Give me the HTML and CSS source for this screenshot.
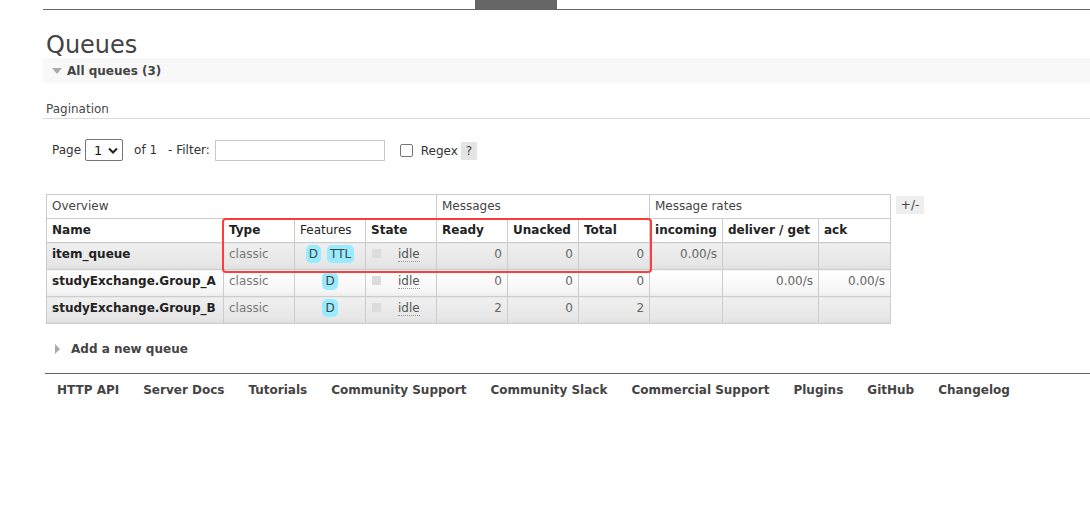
FILE: index.html
```html
<!DOCTYPE html>
<html>
<head>
<meta charset="utf-8">
<link rel="stylesheet" href="styles.css">
</head>
<body>
<div class="topbar">
  <div class="toptab"></div>
</div>
<div class="main">
  <h1 class="title">Queues</h1>
  <div class="section-bar"><span class="tri-down"></span><span class="section-title">All queues (3)</span></div>
  <h3 class="pag-head">Pagination</h3>
  <div class="pag-row">
    <span class="lbl">Page</span>
    <span class="select"><span class="sel-val">1</span><svg class="chev" width="10" height="7" viewBox="0 0 10 7"><path d="M1 1.5 L5 5.5 L9 1.5" fill="none" stroke="#222" stroke-width="2"/></svg></span>
    <span class="lbl of">of 1</span>
    <span class="lbl filt">- Filter:</span>
    <span class="input"></span>
    <span class="check"></span>
    <span class="lbl regex">Regex</span>
    <span class="help">?</span>
  </div>

  <div class="table-wrap">
    <table class="list">
      <colgroup>
        <col class="c-name"><col class="c71"><col class="c71"><col class="c71"><col class="c71"><col class="c71"><col class="c71"><col class="c-inc"><col class="c-del"><col class="c-ack">
      </colgroup>
      <thead>
        <tr class="grp">
          <th colspan="4">Overview</th>
          <th colspan="3">Messages</th>
          <th colspan="3">Message rates</th>
        </tr>
        <tr class="cols">
          <th>Name</th><th>Type</th><th class="normal">Features</th><th>State</th><th>Ready</th><th>Unacked</th><th>Total</th><th>incoming</th><th>deliver / get</th><th>ack</th>
        </tr>
      </thead>
      <tbody>
        <tr class="alt1">
          <td class="name">item_queue</td>
          <td class="type">classic</td>
          <td class="feat"><span class="badge">D</span><span class="badge">TTL</span></td>
          <td class="state"><span class="sq"></span><span class="idle">idle</span></td>
          <td class="num">0</td><td class="num">0</td><td class="num">0</td>
          <td class="num">0.00/s</td><td></td><td></td>
        </tr>
        <tr class="alt2">
          <td class="name">studyExchange.Group_A</td>
          <td class="type">classic</td>
          <td class="feat"><span class="badge">D</span></td>
          <td class="state"><span class="sq"></span><span class="idle">idle</span></td>
          <td class="num">0</td><td class="num">0</td><td class="num">0</td>
          <td></td><td class="num">0.00/s</td><td class="num">0.00/s</td>
        </tr>
        <tr class="alt1">
          <td class="name">studyExchange.Group_B</td>
          <td class="type">classic</td>
          <td class="feat"><span class="badge">D</span></td>
          <td class="state"><span class="sq"></span><span class="idle">idle</span></td>
          <td class="num">2</td><td class="num">0</td><td class="num">2</td>
          <td></td><td></td><td></td>
        </tr>
      </tbody>
    </table>
    <span class="plusminus">+/-</span>
    <div class="highlight"></div>
  </div>

  <div class="add-bar"><span class="tri-right"></span><span class="section-title">Add a new queue</span></div>

  <div class="footer">
    <a>HTTP API</a><a>Server Docs</a><a>Tutorials</a><a>Community Support</a><a>Community Slack</a><a>Commercial Support</a><a>Plugins</a><a>GitHub</a><a>Changelog</a>
  </div>
</div>
</body>
</html>
```
FILE: styles.css
```css
html, body {
  margin: 0;
  padding: 0;
  background: #fff;
}
body {
  font-family: "DejaVu Sans", Verdana, sans-serif;
  font-size: 12px;
  color: #484848;
  width: 1090px;
  overflow: hidden;
}
.topbar {
  margin-left: 43px;
  height: 9px;
  border-bottom: 1px solid #666;
  position: relative;
}
.toptab {
  position: absolute;
  left: 432px;
  top: 0;
  width: 82px;
  height: 9px;
  background: #666;
}
.main {
  padding-left: 43px;
}
.title {
  margin: 0;
  padding: 21px 0 0 3px;
  height: 27px;
  font-size: 24px;
  line-height: 28px;
  font-weight: normal;
  color: #444;
}
.section-bar {
  height: 25px;
  background: #f8f8f8;
  display: flex;
  align-items: center;
}
.tri-down {
  width: 0;
  height: 0;
  border-left: 5px solid transparent;
  border-right: 5px solid transparent;
  border-top: 6px solid #aaa;
  margin-left: 9px;
  margin-right: 5px;
}
.section-title {
  font-weight: bold;
  font-size: 12px;
  color: #444;
}
.pag-head {
  margin: 0;
  margin-top: 19px;
  padding: 0 0 1px 3px;
  font-weight: normal;
  font-size: 12px;
  line-height: 15px;
  color: #484848;
  border-bottom: 1px solid #ddd;
}
.pag-row {
  display: flex;
  align-items: center;
  margin-top: 20px;
  padding-left: 9px;
  height: 22px;
}
.lbl {
  color: #333;
}
.select {
  margin-left: 4px;
  width: 38px;
  height: 22px;
  box-sizing: border-box;
  border: 1px solid #767676;
  border-radius: 2px;
  display: flex;
  align-items: center;
  justify-content: space-between;
  padding: 0 4px 0 8px;
  color: #111;
  font-size: 13px;
}
.of { margin-left: 11px; }
.filt { margin-left: 11px; }
.input {
  margin-left: 5px;
  width: 170px;
  height: 21px;
  box-sizing: border-box;
  border: 1px solid #c8c8c8;
  background: #fff;
}
.check {
  margin-left: 15px;
  width: 13px;
  height: 13px;
  box-sizing: border-box;
  border: 1px solid #767676;
  border-radius: 2px;
}
.regex {
  margin-left: 8px;
  position: relative;
  top: 1px;
}
.help {
  margin-left: 3px;
  width: 16px;
  height: 18px;
  background: #e4e4e4;
  color: #444;
  display: flex;
  align-items: center;
  justify-content: center;
  position: relative;
  top: 1px;
}
.table-wrap {
  margin-top: 33px;
  margin-left: 3px;
  position: relative;
  display: flex;
  align-items: flex-start;
}
table.list {
  border-collapse: collapse;
  table-layout: fixed;
  width: 844px;
}
col.c-name { width: 177px; }
col.c71 { width: 71px; }
col.c-inc { width: 73px; }
col.c-del { width: 96px; }
col.c-ack { width: 72px; }
table.list th, table.list td {
  border: 1px solid #ccc;
  padding: 0 5px;
  text-align: left;
  vertical-align: top;
  white-space: nowrap;
  overflow: hidden;
}
table.list th {
  height: 23px;
  line-height: 23px;
  color: #222;
}
table.list tr.grp th {
  font-weight: normal;
  color: #444;
  background: #fff;
}
table.list tr.cols th {
  font-weight: bold;
  background: #fff;
}
table.list tr.cols th.normal {
  font-weight: normal;
}
table.list td {
  height: 27px;
  box-sizing: border-box;
  padding-top: 3px;
  line-height: 16px;
}
tr.alt1 td {
  background: linear-gradient(#f0f0f0, #e6e6e6 80%, #dedede);
}
tr.alt2 td {
  background: linear-gradient(#ffffff, #f6f6f6 80%, #ececec);
}
table.list td.name {
  font-weight: bold;
  color: #222;
}
table.list td.type {
  color: #777;
}
table.list td.num {
  text-align: right;
  color: #666;
}
table.list td.feat {
  text-align: center;
  padding-top: 2px;
}
.badge {
  display: inline-block;
  background: #99ebff;
  color: #444;
  border-radius: 5px;
  padding: 1px 3px;
  line-height: 16px;
  margin: 0 3px;
}
table.list td.state {
  padding-top: 3px;
}
.sq {
  display: inline-block;
  width: 9px;
  height: 9px;
  background: #dcdcdc;
  vertical-align: top;
  margin-top: 3px;
  margin-left: 1px;
}
.idle {
  margin-left: 17px;
  color: #555;
  border-bottom: 1px dotted #999;
}
.plusminus {
  margin-left: 5px;
  margin-top: 2px;
  width: 28px;
  height: 18px;
  background: #eee;
  color: #444;
  display: flex;
  align-items: center;
  justify-content: center;
}
.highlight {
  position: absolute;
  left: 176px;
  top: 24px;
  width: 426px;
  height: 51px;
  border: 2px solid #ff3b3b;
  border-radius: 4px;
  pointer-events: none;
}
.add-bar {
  margin-top: 17px;
  display: flex;
  align-items: center;
  height: 16px;
  margin-left: 3px;
}
.tri-right {
  width: 0;
  height: 0;
  border-top: 5px solid transparent;
  border-bottom: 5px solid transparent;
  border-left: 5px solid #aaa;
  margin-left: 9px;
  margin-right: 11px;
}
.footer {
  margin-top: 16px;
  margin-left: 2px;
  border-top: 1px solid #666;
  padding: 8px 0 0 12px;
  display: flex;
  gap: 24px;
}
.footer a {
  font-weight: bold;
  color: #444;
  line-height: 16px;
}
```
